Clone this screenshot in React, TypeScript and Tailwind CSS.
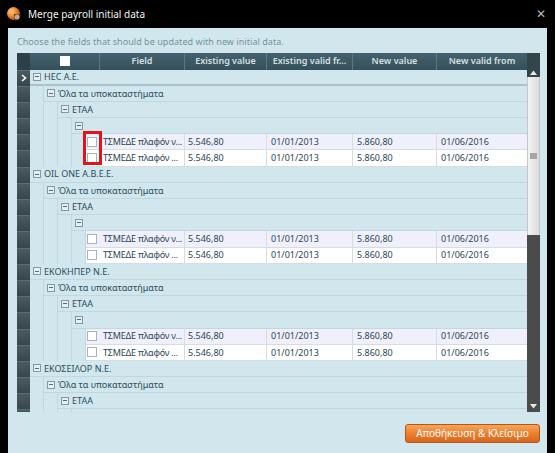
import React from 'react'

type Row =
  | { kind: 'group'; level: number; text: string }
  | { kind: 'data'; alt: boolean; field: string }

const COMPANIES = ['HEC Α.Ε.', 'OIL ONE Α.Β.Ε.Ε.', 'ΕΚΟΚΗΠΕΡ Ν.Ε.', 'ΕΚΟΣΕΙΛΟΡ Ν.Ε.']

const ROWS: Row[] = []
COMPANIES.forEach((c, i) => {
  ROWS.push({ kind: 'group', level: 0, text: c })
  ROWS.push({ kind: 'group', level: 1, text: 'Όλα τα υποκαταστήματα' })
  ROWS.push({ kind: 'group', level: 2, text: 'ΕΤΑΑ' })
  ROWS.push({ kind: 'group', level: 3, text: '' })
  if (i < COMPANIES.length - 1) {
    ROWS.push({ kind: 'data', alt: true, field: 'ΤΣΜΕΔΕ πλαφόν ν...' })
    ROWS.push({ kind: 'data', alt: false, field: 'ΤΣΜΕΔΕ πλαφόν ...' })
  }
})

function Collapse() {
  return (
    <span className="mr-[3px] flex h-[8px] w-[8px] shrink-0 items-center justify-center border border-[#7f9aa6] bg-[#e3f0f4]">
      <span className="h-px w-[4px] bg-[#4e6b78]" />
    </span>
  )
}

function Check() {
  return <span className="block h-[10px] w-[10px] border border-[#a9b3ba] bg-white" />
}

function Indicator({ first }: { first: boolean }) {
  return (
    <div className="flex w-[13px] shrink-0 items-center justify-center border-t border-[#5d6c72] bg-gradient-to-b from-[#4a5a60] to-[#37464c]">
      {first && (
        <svg width="6" height="8" viewBox="0 0 6 8">
          <polyline points="1,1 4.5,4 1,7" fill="none" stroke="#ffffff" strokeWidth="1.6" />
        </svg>
      )}
    </div>
  )
}

function GridRow({ row, first }: { row: Row; first: boolean }) {
  const level = row.kind === 'group' ? row.level : 4
  return (
    <div className="flex h-[16.2px]">
      <Indicator first={first} />
      {Array.from({ length: level }).map((_, j) => (
        <div key={j} className="w-[14px] shrink-0 border-r border-[#c0d7de]" />
      ))}
      {row.kind === 'group' ? (
        <div
          className={`flex flex-1 items-center pl-[3px] text-[#2b4c5c] ${
            first ? 'border-b-2 border-[#a9c3cb]' : 'border-b border-[#c0d7de]'
          }`}
        >
          <Collapse />
          <span>{row.text}</span>
        </div>
      ) : (
        <div
          className={`flex flex-1 border-b border-[#d5dde3] text-[#2b4656] ${
            row.alt ? 'bg-[#eff0fb]' : 'bg-white'
          }`}
        >
          <div className="flex w-[14px] shrink-0 items-center pl-[1px]">
            <Check />
          </div>
          <div className="flex w-[85px] shrink-0 items-center overflow-hidden border-r border-[#d5dde3] pl-[3px] tracking-[-0.2px]">
            {row.field}
          </div>
          <div className="flex w-[82px] shrink-0 items-center border-r border-[#d5dde3] pl-[3px]">5.546,80</div>
          <div className="flex w-[86px] shrink-0 items-center border-r border-[#d5dde3] pl-[4px]">01/01/2013</div>
          <div className="flex w-[84px] shrink-0 items-center border-r border-[#d5dde3] pl-[4px]">5.860,80</div>
          <div className="flex w-[90px] shrink-0 items-center pl-[4px]">01/06/2016</div>
        </div>
      )}
    </div>
  )
}

function HeaderCell({ w, children }: { w: string; children?: React.ReactNode }) {
  return (
    <div className={`${w} flex shrink-0 items-center justify-center border-r border-[#5d7883]`}>{children}</div>
  )
}

export default function App() {
  return (
    <div className="relative flex h-[453px] w-[555px] flex-col whitespace-nowrap bg-black font-['Noto_Sans',sans-serif] text-[9px]">
      <div className="flex h-[28px] shrink-0 items-center pl-[6px]">
        <svg width="16" height="16" viewBox="0 0 16 16">
          <defs>
            <radialGradient id="ball" cx="0.35" cy="0.35" r="0.7">
              <stop offset="0" stopColor="#ffd08a" />
              <stop offset="0.5" stopColor="#f08a2c" />
              <stop offset="1" stopColor="#a84a10" />
            </radialGradient>
          </defs>
          <circle cx="7.5" cy="7.5" r="6.5" fill="url(#ball)" />
          <path d="M8 8 L15 9 A7 7 0 0 1 9 15 Z" fill="#3a2a1e" />
          <circle cx="11" cy="11" r="2.5" fill="#c9a88a" />
        </svg>
        <span className="ml-[6px] text-[10px] text-[#f2f2f2]">Merge payroll initial data</span>
        <span className="ml-auto mr-[9px] text-[12px] leading-none text-[#b8b8b8]">✕</span>
      </div>

      <div className="mx-[8px] flex flex-1 flex-col bg-[#d2e7ed] pl-[9px] pr-[7px] pb-[10px]">
        <div className="pt-[7px] pb-[4px] tracking-[0.05px] text-[#7393a1]">
          Choose the fields that should be updated with new initial data.
        </div>

        <div className="flex h-[359px]">
          <div className="flex w-[510px] flex-col overflow-hidden">
            <div className="flex h-[17px] shrink-0 bg-gradient-to-b from-[#46626e] to-[#34505b] font-semibold text-[#d5e0e4]">
              <div className="w-[13px] shrink-0 bg-[#2c4049]" />
              <HeaderCell w="w-[70px]">
                <span className="block h-[10px] w-[10px] bg-white" />
              </HeaderCell>
              <HeaderCell w="w-[85px]">Field</HeaderCell>
              <HeaderCell w="w-[82px]">Existing value</HeaderCell>
              <HeaderCell w="w-[86px]">Existing valid fr...</HeaderCell>
              <HeaderCell w="w-[84px]">New value</HeaderCell>
              <div className="flex w-[90px] shrink-0 items-center justify-center">New valid from</div>
            </div>
            <div className="flex-1 overflow-hidden">
              {ROWS.map((r, i) => (
                <GridRow key={i} row={r} first={i === 0} />
              ))}
            </div>
          </div>

          <div className="flex w-[13px] flex-col">
            <div className="flex h-[24px] items-end justify-center bg-[#33444b] pb-[2px]">
              <svg width="7" height="5" viewBox="0 0 7 5">
                <polygon points="0,5 3.5,0.5 7,5" fill="#e8e8e8" />
              </svg>
            </div>
            <div className="flex h-[158px] items-center justify-center border-x border-[#c6c6c6] bg-gradient-to-r from-[#f3f3f3] to-[#dcdcdc]">
              <span className="block h-[6px] w-[7px] bg-[#a5a5a5]" />
            </div>
            <div className="flex flex-1 items-end justify-center bg-[#4b4b4b] pb-[3px]">
              <svg width="7" height="5" viewBox="0 0 7 5">
                <polygon points="0,0 3.5,4.5 7,0" fill="#e8e8e8" />
              </svg>
            </div>
          </div>
        </div>

        <div className="flex flex-1 items-end justify-end">
          <button className="h-[19px] w-[135px] rounded-[3px] border border-[#b4561a] bg-gradient-to-b from-[#f6a55a] via-[#ec7f2c] to-[#d9651c] text-[10px] text-white">
            Αποθήκευση &amp; Κλείσιμο
          </button>
        </div>
      </div>

      <div className="absolute left-[83px] top-[131px] h-[34px] w-[19px] border-[3px] border-[#e0141a]" />
    </div>
  )
}
